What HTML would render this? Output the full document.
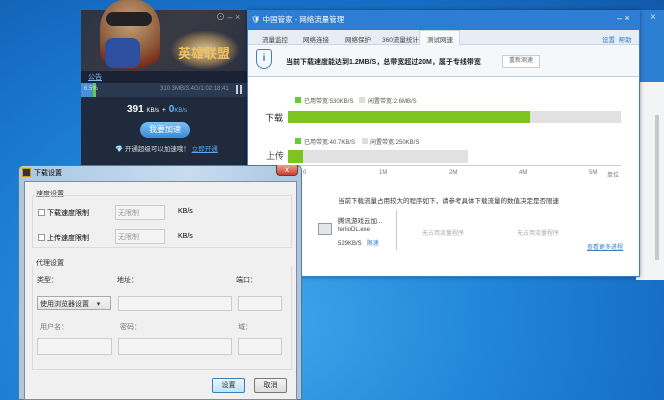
<!DOCTYPE html>
<html><head><meta charset="utf-8"><style>
*{margin:0;padding:0;box-sizing:border-box}
body{width:664px;height:400px;overflow:hidden;position:relative;font-family:"Liberation Sans","Noto Sans CJK SC",sans-serif;font-size:7px;color:#333;
background:radial-gradient(ellipse at 40% 80%,#3fa6ec 0%,#2186d8 40%,#156cc2 75%,#1258a8 100%)}
.a{position:absolute}
.t{position:absolute;white-space:nowrap}
</style></head><body>
<div class="a" style="left:636px;top:10px;width:28px;height:270px;background:#f2f4f6"></div>
<div class="a" style="left:636px;top:10px;width:28px;height:72px;background:#2d7fd2"></div>
<div class="t" style="left:650px;top:12px;color:#cfe3f7;font-size:10px">×</div>
<div class="a" style="left:655px;top:115px;width:4px;height:145px;background:#c8c8c8"></div>

<div class="a" style="left:81px;top:10px;width:166px;height:155px;background:#1f2a3c"></div>
<div class="a" style="left:81px;top:10px;width:166px;height:62px;background:linear-gradient(135deg,#2b3445,#3a3a44 50%,#2a3040)"></div>
<div class="a" style="left:100px;top:0;width:60px;height:72px;border-radius:40% 40% 30% 30%;background:radial-gradient(circle at 50% 30%,#c9a27c,#8b5a3a 55%,#7a2a1a 80%,transparent 82%)"></div>
<div class="a" style="left:106px;top:12px;width:46px;height:14px;border-radius:7px;background:#222"></div>
<div class="a" style="left:105px;top:38px;width:35px;height:30px;background:#2e4fa0;border-radius:8px"></div>
<div class="a" style="left:170px;top:30px;width:70px;height:40px;border-radius:10px;background:radial-gradient(ellipse,#d8c7a0 0%,#8a7450 45%,transparent 70%)"></div>
<div class="t" style="left:178px;top:43px;color:#f0c060;font-size:13px;font-weight:bold">英雄联盟</div>
<div class="t" style="left:216px;top:10px;color:#aaa;font-size:9px">⊙ – ×</div>
<div class="a" style="left:81px;top:71px;width:166px;height:12px;background:#1a2233"></div>
<div class="t" style="left:88px;top:72px;color:#7fb6f0;font-size:7px;text-decoration:underline">公告</div>
<div class="a" style="left:81px;top:83px;width:166px;height:14px;background:#2a3850"></div>
<div class="a" style="left:81px;top:83px;width:14px;height:14px;background:#4a90d8"></div>
<div class="a" style="left:93px;top:83px;width:3px;height:14px;background:#6c3"></div>
<div class="t" style="left:84px;top:86px;color:#cde;font-size:6px">6.5%</div>
<div class="t" style="left:160px;top:86px;color:#8a98ac;font-size:6px">310.3MB/3.4G/1:02:18:41</div>
<div class="a" style="left:236px;top:85px;width:2px;height:9px;background:#ccd"></div><div class="a" style="left:240px;top:85px;width:2px;height:9px;background:#ccd"></div>
<div class="t" style="left:127px;top:104px;color:#fff;font-size:10px;font-weight:bold">391 <span style="font-size:6px;font-weight:normal">KB/s</span> <span style="font-size:7px;font-weight:normal">+</span> <span style="color:#6ab8f7">0</span><span style="font-size:6px;font-weight:normal;color:#6ab8f7">KB/s</span></div>
<div class="a" style="left:140px;top:122px;width:50px;height:16px;border-radius:8px;background:linear-gradient(#7cc0f5,#3a8ad8);color:#fff;font-size:8px;text-align:center;line-height:16px">我要加速</div>
<div class="t" style="left:115px;top:143px;color:#ddd;font-size:6.5px">💎 开通超级可以加速哦！ <span style="color:#5aa8f0;text-decoration:underline">立即开通</span></div>

<div class="a" style="left:247px;top:10px;width:393px;height:267px;background:#fff;border:1px solid #3a7ec8;box-shadow:0 0 4px rgba(0,0,0,.4)"></div>
<div class="a" style="left:247px;top:10px;width:393px;height:20px;background:#2c7dd3"></div>
<div class="t" style="left:251px;top:14px;color:#fff;font-size:7.5px">🛡 中国管家 - 网络流量管理</div>
<div class="t" style="left:617px;top:13px;color:#fff;font-size:9px">– ×</div>
<div class="a" style="left:248px;top:30px;width:391px;height:15px;background:#e6edf5;border-bottom:1px solid #c9d6e4"></div>
<div class="a" style="left:419px;top:30px;width:41px;height:15px;background:#f7f9fb;border:1px solid #c9d6e4;border-bottom:none"></div>
<div class="t" style="left:262px;top:34px;font-size:6.5px;color:#444">流量监控</div>
<div class="t" style="left:303px;top:34px;font-size:6.5px;color:#444">网络连接</div>
<div class="t" style="left:345px;top:34px;font-size:6.5px;color:#444">网络保护</div>
<div class="t" style="left:382px;top:34px;font-size:6.5px;color:#444">360流量统计</div>
<div class="t" style="left:427px;top:34px;font-size:6.5px;color:#444">测试网速</div>
<div class="t" style="left:602px;top:34px;font-size:6.5px;color:#3a7ec8">设置 &nbsp;帮助</div>
<div class="a" style="left:248px;top:45px;width:391px;height:32px;background:#f4f8fb;border-bottom:1px solid #b8cbe0"></div>
<div class="a" style="left:256px;top:49px;width:16px;height:20px;border:1.5px solid #3a7ec8;border-radius:3px 3px 8px 8px;color:#3a7ec8;font-size:10px;text-align:center;line-height:17px;font-weight:bold">i</div>
<div class="t" style="left:286px;top:57px;font-size:7px;font-weight:bold;color:#222">当前下载速度能达到1.2MB/S，总带宽超过20M，属于专线带宽</div>
<div class="a" style="left:502px;top:55px;width:38px;height:13px;background:#fff;border:1px solid #ccc;font-size:6px;text-align:center;line-height:11px;color:#666">重新测速</div>
<div class="a" style="left:295px;top:97px;width:6px;height:6px;background:#6c3"></div>
<div class="t" style="left:304px;top:96px;font-size:6px;color:#555">已用带宽:530KB/S</div>
<div class="a" style="left:359px;top:97px;width:6px;height:6px;background:#ddd"></div>
<div class="t" style="left:368px;top:96px;font-size:6px;color:#555">闲置带宽:2.6MB/S</div>
<div class="t" style="left:265px;top:111px;font-size:9px;color:#222">下载</div>
<div class="a" style="left:288px;top:111px;width:333px;height:12px;background:#e1e1e1"></div>
<div class="a" style="left:288px;top:111px;width:242px;height:12px;background:#7dc51e"></div>
<div class="a" style="left:295px;top:138px;width:6px;height:6px;background:#6c3"></div>
<div class="t" style="left:304px;top:137px;font-size:6px;color:#555">已用带宽:40.7KB/S</div>
<div class="a" style="left:362px;top:138px;width:6px;height:6px;background:#ddd"></div>
<div class="t" style="left:370px;top:137px;font-size:6px;color:#555">闲置带宽:250KB/S</div>
<div class="t" style="left:266px;top:149px;font-size:9px;color:#444">上传</div>
<div class="a" style="left:288px;top:150px;width:180px;height:13px;background:#e1e1e1"></div>
<div class="a" style="left:288px;top:150px;width:15px;height:13px;background:#7dc51e"></div>
<div class="a" style="left:288px;top:165px;width:333px;height:1px;background:#ccc"></div>
<div class="t" style="left:303px;top:170px;font-size:6px;color:#777">0</div>
<div class="t" style="left:379px;top:170px;font-size:6px;color:#777">1M</div>
<div class="t" style="left:449px;top:170px;font-size:6px;color:#777">2M</div>
<div class="t" style="left:519px;top:170px;font-size:6px;color:#777">4M</div>
<div class="t" style="left:589px;top:170px;font-size:6px;color:#777">5M</div>
<div class="t" style="left:607px;top:170px;font-size:6px;color:#777">单位</div>
<div class="t" style="left:338px;top:195px;font-size:6.5px;color:#333">当前下载流量占用较大的程序如下，请参考具体下载流量的数值决定是否限速</div>
<div class="a" style="left:318px;top:223px;width:14px;height:12px;background:#dfe8e4;border:1px solid #99a"></div>
<div class="t" style="left:338px;top:215px;font-size:6.5px;color:#333">腾讯游戏云加...</div>
<div class="t" style="left:338px;top:227px;font-size:6px;color:#444">tenioDL.exe</div>
<div class="t" style="left:338px;top:238px;font-size:6px;color:#444">529KB/S &nbsp; <span style="color:#3a7ec8">限速</span></div>
<div class="a" style="left:396px;top:210px;width:1px;height:40px;background:#ccc"></div>
<div class="t" style="left:422px;top:228px;font-size:6px;color:#aaa">无占用流量程序</div>
<div class="t" style="left:517px;top:228px;font-size:6px;color:#aaa">无占用流量程序</div>
<div class="t" style="left:587px;top:242px;font-size:6px;color:#3a7ec8;text-decoration:underline">查看更多进程</div>

<div class="a" style="left:18px;top:165px;width:284px;height:235px;background:linear-gradient(90deg,#a8c8e4,#c9dcef 60%,#a9c6e2);border:1px solid #5a7590;border-radius:5px 5px 0 0"></div>
<div class="a" style="left:22px;top:168px;width:9px;height:9px;background:#333;border:1px solid #d90"></div>
<div class="t" style="left:34px;top:168px;font-size:7px;color:#000">下载设置</div>
<div class="a" style="left:276px;top:165px;width:22px;height:11px;background:linear-gradient(#e8a090,#c8402a);border:1px solid #733;border-top:none;border-radius:0 0 4px 4px;color:#fff;font-size:8px;text-align:center;line-height:10px">x</div>
<div class="a" style="left:24px;top:181px;width:273px;height:219px;background:#f0f0f0;border:1px solid #889"></div>
<div class="t" style="left:36px;top:189px;font-size:7px">速度设置</div>
<div class="a" style="left:32px;top:195px;width:260px;height:53px;border:1px solid #dcdcdc"></div>
<div class="a" style="left:38px;top:209px;width:7px;height:7px;border:1px solid #999;background:#fff"></div>
<div class="t" style="left:47px;top:208px;font-size:7px;color:#000">下载速度限制</div>
<div class="a" style="left:38px;top:234px;width:7px;height:7px;border:1px solid #999;background:#fff"></div>
<div class="t" style="left:47px;top:233px;font-size:7px;color:#000">上传速度限制</div>
<div class="a" style="left:115px;top:205px;width:50px;height:15px;border:1px solid #ccc;background:#f4f4f4"></div>
<div class="t" style="left:118px;top:208px;font-size:7px;color:#999">无限制</div>
<div class="a" style="left:115px;top:229px;width:50px;height:15px;border:1px solid #ccc;background:#f4f4f4"></div>
<div class="t" style="left:118px;top:232px;font-size:7px;color:#999">无限制</div>
<div class="t" style="left:178px;top:208px;font-size:7px;color:#000">KB/s</div>
<div class="t" style="left:178px;top:233px;font-size:7px;color:#000">KB/s</div>
<div class="t" style="left:36px;top:258px;font-size:7px">代理设置</div>
<div class="a" style="left:32px;top:266px;width:260px;height:104px;border:1px solid #dcdcdc;border-top:none"></div>
<div class="t" style="left:37px;top:275px;font-size:7px">类型：</div>
<div class="t" style="left:117px;top:275px;font-size:7px">地址：</div>
<div class="t" style="left:236px;top:275px;font-size:7px">端口：</div>
<div class="a" style="left:37px;top:296px;width:74px;height:14px;border:1px solid #aaa;background:linear-gradient(#f6f6f6,#e2e2e2)"></div>
<div class="t" style="left:40px;top:299px;font-size:7px">使用浏览器设置 &nbsp;&nbsp;&nbsp;▾</div>
<div class="a" style="left:118px;top:296px;width:114px;height:15px;border:1px solid #ccc;background:#f4f4f4"></div>
<div class="a" style="left:238px;top:296px;width:44px;height:15px;border:1px solid #ccc;background:#f4f4f4"></div>
<div class="t" style="left:40px;top:322px;font-size:7px;color:#777">用户名：</div>
<div class="t" style="left:120px;top:322px;font-size:7px;color:#777">密码：</div>
<div class="t" style="left:238px;top:322px;font-size:7px;color:#777">域：</div>
<div class="a" style="left:37px;top:338px;width:75px;height:17px;border:1px solid #ccc;background:#f4f4f4"></div>
<div class="a" style="left:118px;top:338px;width:114px;height:17px;border:1px solid #ccc;background:#f4f4f4"></div>
<div class="a" style="left:238px;top:338px;width:44px;height:17px;border:1px solid #ccc;background:#f4f4f4"></div>
<div class="a" style="left:212px;top:378px;width:33px;height:15px;border:1px solid #3c7fb1;border-radius:2px;background:linear-gradient(#eaf6fd,#bfe3f7);font-size:7px;text-align:center;line-height:13px">设置</div>
<div class="a" style="left:254px;top:378px;width:33px;height:15px;border:1px solid #777;border-radius:2px;background:linear-gradient(#f4f4f4,#dcdcdc);font-size:7px;text-align:center;line-height:13px">取消</div>
</body></html>
